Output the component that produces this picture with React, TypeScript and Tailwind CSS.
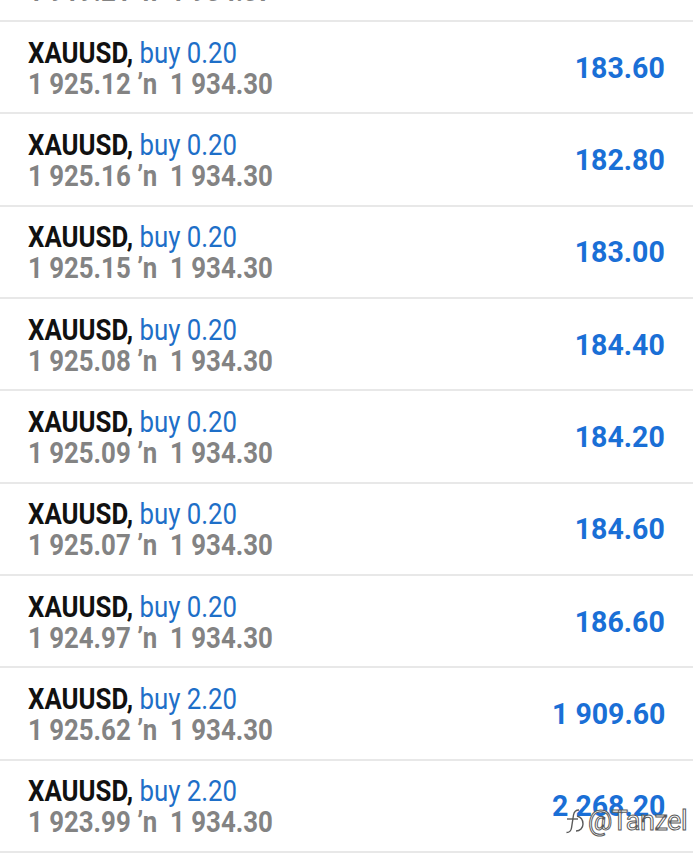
const rows = [
  { lot: "0.20", open: "1 919.21", cur: "1 934.37", profit: "183.60" },
  { lot: "0.20", open: "1 925.12", cur: "1 934.30", profit: "183.60" },
  { lot: "0.20", open: "1 925.16", cur: "1 934.30", profit: "182.80" },
  { lot: "0.20", open: "1 925.15", cur: "1 934.30", profit: "183.00" },
  { lot: "0.20", open: "1 925.08", cur: "1 934.30", profit: "184.40" },
  { lot: "0.20", open: "1 925.09", cur: "1 934.30", profit: "184.20" },
  { lot: "0.20", open: "1 925.07", cur: "1 934.30", profit: "184.60" },
  { lot: "0.20", open: "1 924.97", cur: "1 934.30", profit: "186.60" },
  { lot: "2.20", open: "1 925.62", cur: "1 934.30", profit: "1 909.60" },
  { lot: "2.20", open: "1 923.99", cur: "1 934.30", profit: "2 268.20" },
];

function Row({ lot, open, cur, profit }: (typeof rows)[number]) {
  return (
    <div className="flex h-[92.33px] items-center justify-between border-b-2 border-[#e8e8e8] pr-[28px] pl-[28px]">
      <div className="flex origin-left scale-x-[0.86] flex-col pt-[1px]">
        <div className="text-[30px] leading-[31px] whitespace-nowrap">
          <span className="font-bold text-[#111]">XAUUSD,</span>{" "}
          <span className="text-[#1e6fc8]">buy {lot}</span>
        </div>
        <div className="text-[30px] leading-[31px] font-bold whitespace-nowrap text-[#838383]">
          {open} ʼn&nbsp; {cur}
        </div>
      </div>
      <div className="origin-right scale-x-[0.95] text-[30px] font-bold whitespace-nowrap text-[#1a6fd6]">
        {profit}
      </div>
    </div>
  );
}

export default function App() {
  return (
    <div className="relative h-[859px] w-[693px] overflow-hidden bg-white font-['Roboto',sans-serif]">
      <div className="-mt-[70.33px]">
        {rows.map((r, i) => (
          <Row key={i} {...r} />
        ))}
      </div>
      <div className="absolute right-[6px] bottom-[24px] flex items-center gap-[2px] text-[27px] leading-none text-white [-webkit-text-stroke:1px_#5a5a5a]">
        <svg width="24" height="28" viewBox="0 0 24 28" fill="none" stroke="#5a5a5a" strokeWidth="1.4">
          <path d="M17 3c-3 0-5 2-5.5 5L9.5 21c-.5 3-2.5 4.5-5 4.5" />
          <path d="M5 12h11" />
          <path d="M15 9c4 1 6 4 6 8s-3 7-7 7" />
        </svg>
        <span className="tracking-[-0.5px]">@Tanzel</span>
      </div>
    </div>
  );
}
